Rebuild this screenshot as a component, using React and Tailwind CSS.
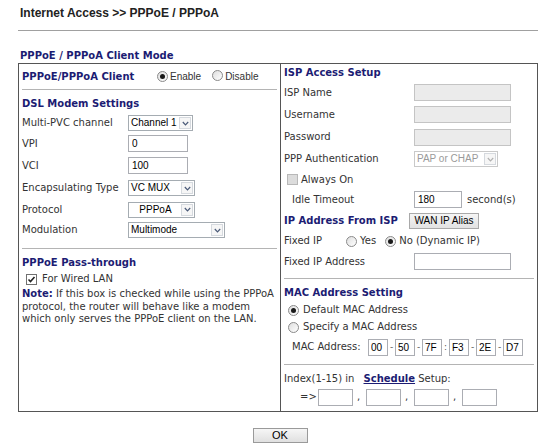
import React from "react";

const HEAD = "font-bold text-[#1c1c73]";

function Radio({ checked }) {
  return (
    <span className="inline-flex h-[11px] w-[11px] shrink-0 items-center justify-center rounded-full border border-[#8a8a8a] bg-gradient-to-br from-[#dedede] to-white">
      {checked && <span className="h-[5px] w-[5px] rounded-full bg-[#1a1a1a]" />}
    </span>
  );
}

function Check({ checked, disabled }) {
  if (disabled) {
    return <span className="inline-flex h-[11px] w-[11px] shrink-0 border border-[#b8b8b8] bg-[#dcdcdc]" />;
  }
  return (
    <span className="inline-flex h-[11px] w-[11px] shrink-0 items-center justify-center border border-[#707070] bg-white">
      {checked && (
        <svg width="9" height="9" viewBox="0 0 9 9">
          <path d="M1.5 4.5 L3.5 6.5 L7.5 2" fill="none" stroke="#222" strokeWidth="1.6" />
        </svg>
      )}
    </span>
  );
}

function Select({ className, children, disabled }) {
  return (
    <div
      className={`flex h-[16px] items-center justify-between border bg-white pl-[2px] pr-[1px] font-['Liberation_Sans',sans-serif] text-[10px] ${
        disabled ? "border-[#c9c9c9] text-[#9a9a9a]" : "border-[#a5acb2] text-black"
      } ${className}`}
    >
      <span className="whitespace-pre">{children}</span>
      <span className="ml-[2px] flex h-[12px] w-[12px] shrink-0 items-center justify-center border border-[#d5d9de] bg-[#f6f6f6]">
        <svg width="7" height="5" viewBox="0 0 7 5">
          <path d="M0.8 1 L3.5 3.8 L6.2 1" fill="none" stroke={disabled ? "#b0b0b0" : "#4a5a78"} strokeWidth="1.2" />
        </svg>
      </span>
    </div>
  );
}

function Field({ className, value, disabled }) {
  return (
    <input
      readOnly
      value={value || ""}
      className={`h-[17px] border font-['Liberation_Sans',sans-serif] text-[10px] text-black outline-none ${
        disabled ? "border-[#c4c4c4] bg-[#ebebeb]" : "border-[#abadb3] bg-white"
      } ${className}`}
    />
  );
}

function Sep() {
  return <div className="mx-[3px] h-px bg-[#b4b4b4]" />;
}

function LeftRow({ h, label, children }) {
  return (
    <div className={`flex items-center ${h}`}>
      <span className="w-[106px] shrink-0">{label}</span>
      {children}
    </div>
  );
}

function RightRow({ h, label, children }) {
  return (
    <div className={`flex items-center ${h}`}>
      <span className="w-[130px] shrink-0">{label}</span>
      {children}
    </div>
  );
}

export default function App() {
  const mac = ["00", "50", "7F", "F3", "2E", "D7"];
  const macSep = ["-", "-", ":", "-", "-"];

  return (
    <div className="h-[446px] w-[560px] overflow-hidden bg-white font-['DejaVu_Sans',sans-serif] text-[10px] leading-[12px] text-[#333]">
      <div className="px-[18px]">
        {/* page title */}
        <div className="pl-[2px] pt-[6px] font-['Liberation_Sans',sans-serif] text-[12px] font-bold leading-[14px] text-[#222]">
          Internet Access &gt;&gt; PPPoE / PPPoA
        </div>
        <div className="mt-[10px] h-px w-[520px] bg-[#a0a0a0]" />

        <div className={`mt-[19px] pl-[2px] ${HEAD}`}>PPPoE / PPPoA Client Mode</div>

        {/* main table */}
        <div className="mt-px flex h-[349px] w-[520px] border border-[#555]">
          {/* left cell */}
          <div className="flex w-[262px] shrink-0 flex-col border-r border-[#555]">
            <div className="flex h-[25px] items-center pl-[3px]">
              <span className={`w-[135px] shrink-0 ${HEAD}`}>PPPoE/PPPoA Client</span>
              <Radio checked />
              <span className="ml-[2px] font-['Liberation_Sans',sans-serif] text-[10px]">Enable</span>
              <span className="ml-[11px]">
                <Radio />
              </span>
              <span className="ml-[2px] font-['Liberation_Sans',sans-serif] text-[10px]">Disable</span>
            </div>
            <Sep />
            <div className="pl-[3px]">
              <div className={`flex h-[23px] items-end pb-[3px] ${HEAD}`}>DSL Modem Settings</div>
              <LeftRow h="h-[20px]" label="Multi-PVC channel">
                <Select className="w-[65px]">Channel 1</Select>
              </LeftRow>
              <LeftRow h="h-[21px]" label="VPI">
                <Field className="w-[60px] px-[3px]" value="0" />
              </LeftRow>
              <LeftRow h="h-[23px]" label="VCI">
                <Field className="w-[60px] px-[3px]" value="100" />
              </LeftRow>
              <LeftRow h="h-[22px]" label="Encapsulating Type">
                <Select className="w-[67px]">VC MUX</Select>
              </LeftRow>
              <LeftRow h="h-[21px]" label="Protocol">
                <Select className="w-[67px]">{"   PPPoA"}</Select>
              </LeftRow>
              <LeftRow h="h-[20px]" label="Modulation">
                <Select className="w-[97px]">Multimode</Select>
              </LeftRow>
              <div className="h-[8px]" />
            </div>
            <Sep />
            <div className="pl-[3px]">
              <div className={`h-[22px] pt-[8px] ${HEAD}`}>PPPoE Pass-through</div>
              <div className="flex h-[16px] items-center pl-[4px]">
                <Check checked />
                <span className="ml-[5px]">For Wired LAN</span>
              </div>
              <div className="whitespace-nowrap pt-px leading-[12.5px]">
                <span className={HEAD}>Note:</span> If this box is checked while using the PPPoA
                <br />
                protocol, the router will behave like a modem
                <br />
                which only serves the PPPoE client on the LAN.
              </div>
            </div>
          </div>

          {/* right cell */}
          <div className="flex min-w-0 flex-1 flex-col">
            <div className="pl-[3px]">
              <div className={`flex h-[18px] items-center ${HEAD}`}>ISP Access Setup</div>
              <RightRow h="h-[21px]" label="ISP Name">
                <Field className="w-[97px]" disabled />
              </RightRow>
              <RightRow h="h-[23px]" label="Username">
                <Field className="w-[97px]" disabled />
              </RightRow>
              <RightRow h="h-[22px]" label="Password">
                <Field className="w-[97px]" disabled />
              </RightRow>
              <RightRow h="h-[22px]" label="PPP Authentication">
                <Select className="w-[84px]" disabled>
                  PAP or CHAP
                </Select>
              </RightRow>
              <div className="flex h-[19px] items-center pl-[3px]">
                <Check disabled />
                <span className="ml-[3px]">Always On</span>
              </div>
              <div className="flex h-[21px] items-center">
                <span className="w-[130px] shrink-0 pl-[8px]">Idle Timeout</span>
                <Field className="w-[48px] px-[3px]" value="180" />
                <span className="ml-[5px]">second(s)</span>
              </div>
              <div className="flex h-[21px] items-center">
                <span className={`w-[125px] shrink-0 ${HEAD}`}>IP Address From ISP</span>
                <button className="h-[16px] w-[70px] border border-[#a9a9a9] bg-gradient-to-b from-[#f5f5f5] to-[#e2e2e2] font-['Liberation_Sans',sans-serif] text-[10px] leading-[14px] text-black">
                  WAN IP Alias
                </button>
              </div>
              <div className="flex h-[20px] items-center">
                <span className="w-[62px] shrink-0">Fixed IP</span>
                <Radio />
                <span className="ml-[3px]">Yes</span>
                <span className="ml-[9px]">
                  <Radio checked />
                </span>
                <span className="ml-[3px]">No (Dynamic IP)</span>
              </div>
              <RightRow h="h-[21px]" label="Fixed IP Address">
                <Field className="w-[97px]" />
              </RightRow>
              <div className="h-[6px]" />
            </div>
            <Sep />
            <div className="pl-[3px]">
              <div className={`h-[23px] pt-[8px] ${HEAD}`}>MAC Address Setting</div>
              <div className="flex h-[16px] items-center pl-[4px]">
                <Radio checked />
                <span className="ml-[4px]">Default MAC Address</span>
              </div>
              <div className="flex h-[18px] items-center pl-[4px]">
                <Radio />
                <span className="ml-[4px]">Specify a MAC Address</span>
              </div>
              <div className="flex h-[22px] items-center pl-[8px]">
                <span className="w-[76px] shrink-0">MAC Address:</span>
                {mac.map((m, i) => (
                  <React.Fragment key={m}>
                    <Field className="w-[20px] px-[2px]" value={m} />
                    {i < macSep.length && (
                      <span className="w-[7px] text-center text-[9px] text-[#555]">{macSep[i]}</span>
                    )}
                  </React.Fragment>
                ))}
              </div>
              <div className="h-[6px]" />
            </div>
            <Sep />
            <div className="pl-[3px]">
              <div className="h-[22px] pt-[8px]">
                Index(1-15) in{" "}
                <a className="ml-[6px] font-bold text-[#1c1c73] underline">Schedule</a> Setup:
              </div>
              <div className="flex h-[20px] items-center pl-[16px]">
                <span className="w-[18px] shrink-0">=&gt;</span>
                {[0, 1, 2, 3].map((i) => (
                  <React.Fragment key={i}>
                    <Field className="w-[35px]" />
                    {i < 3 && <span className="w-[13px] pl-[4px]">,</span>}
                  </React.Fragment>
                ))}
              </div>
            </div>
          </div>
        </div>

        {/* submit */}
        <div className="mt-[16px] flex justify-center">
          <button className="h-[15px] w-[55px] border border-[#9a9a9a] bg-gradient-to-b from-[#f6f6f6] to-[#e0e0e0] font-['Liberation_Sans',sans-serif] text-[11px] leading-[13px] text-black">
            OK
          </button>
        </div>
      </div>
    </div>
  );
}
